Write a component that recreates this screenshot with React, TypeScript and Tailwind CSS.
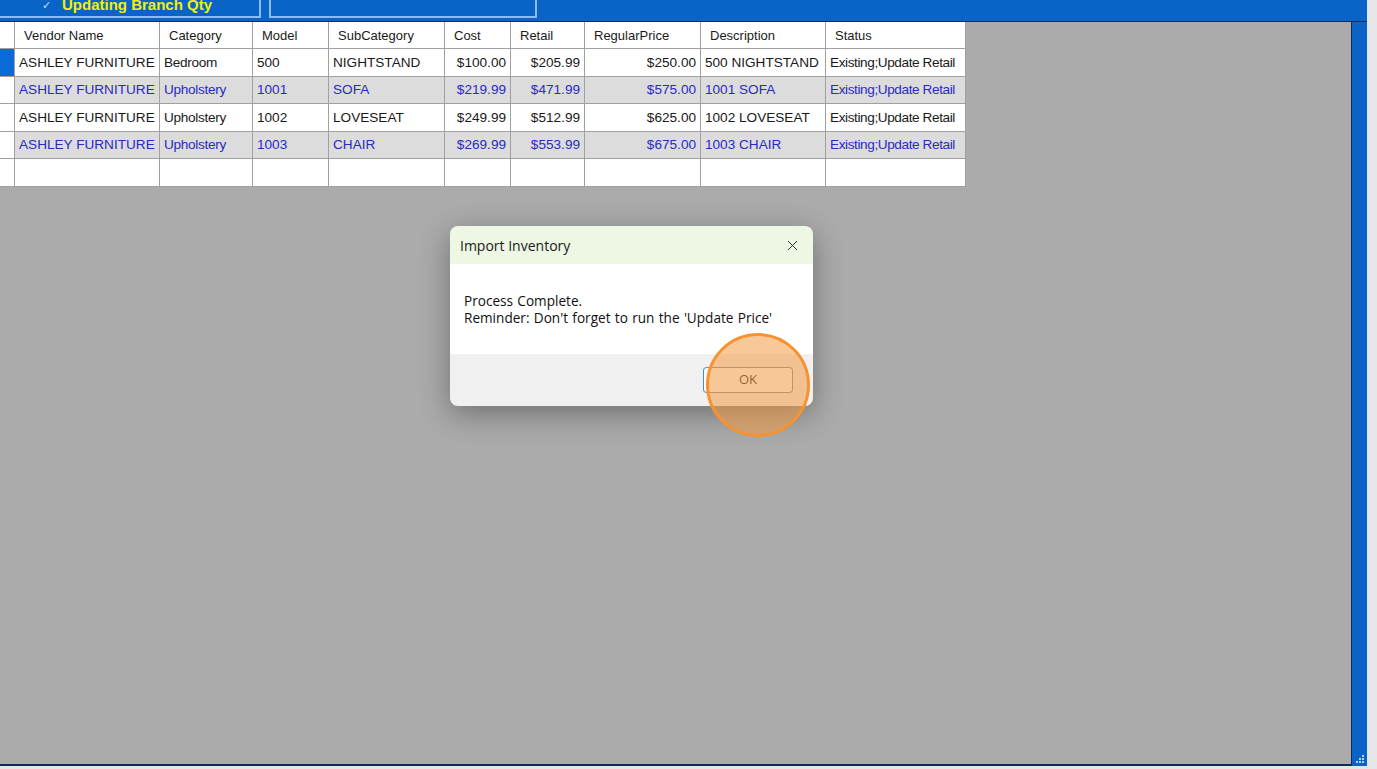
import { X } from 'lucide-react';

type Row = {
  vendor: string;
  category: string;
  model: string;
  sub: string;
  cost: string;
  retail: string;
  regular: string;
  desc: string;
  status: string;
};

const rows: Row[] = [
  { vendor: 'ASHLEY FURNITURE', category: 'Bedroom', model: '500', sub: 'NIGHTSTAND', cost: '$100.00', retail: '$205.99', regular: '$250.00', desc: '500 NIGHTSTAND', status: 'Existing;Update Retail' },
  { vendor: 'ASHLEY FURNITURE', category: 'Upholstery', model: '1001', sub: 'SOFA', cost: '$219.99', retail: '$471.99', regular: '$575.00', desc: '1001 SOFA', status: 'Existing;Update Retail' },
  { vendor: 'ASHLEY FURNITURE', category: 'Upholstery', model: '1002', sub: 'LOVESEAT', cost: '$249.99', retail: '$512.99', regular: '$625.00', desc: '1002 LOVESEAT', status: 'Existing;Update Retail' },
  { vendor: 'ASHLEY FURNITURE', category: 'Upholstery', model: '1003', sub: 'CHAIR', cost: '$269.99', retail: '$553.99', regular: '$675.00', desc: '1003 CHAIR', status: 'Existing;Update Retail' },
];

const cols = [
  { label: 'Vendor Name', w: 'w-[145px]' },
  { label: 'Category', w: 'w-[93px]' },
  { label: 'Model', w: 'w-[76px]' },
  { label: 'SubCategory', w: 'w-[116px]' },
  { label: 'Cost', w: 'w-[66px]' },
  { label: 'Retail', w: 'w-[74px]' },
  { label: 'RegularPrice', w: 'w-[116px]' },
  { label: 'Description', w: 'w-[125px]' },
  { label: 'Status', w: 'w-[140px]' },
];

const cell = 'border border-[#a0a0a0] px-[4px] h-[27.5px] pt-[1px] whitespace-nowrap overflow-hidden';

const App = () => {
  return (
    <div className="relative w-[1377px] h-[769px] overflow-hidden bg-[#e6e6e6] font-['Liberation_Sans',Arial,sans-serif]">
      <div className="flex flex-col w-[1367px] h-[766px] bg-[#0a64c8]">
        {/* top group boxes */}
        <div className="flex h-[22px] gap-[8px] border-b border-[#0c2d5a]">
          <div className="w-[261px] h-[18px] border-r-2 border-b-2 border-[#8dbcf0] flex items-end pl-[42px] overflow-hidden">
            <span className="text-[#c8e0ff] text-[11px] leading-none mb-[5px] mr-[11px]">✓</span>
            <span className="text-[#f4f000] text-[15px] font-bold leading-[16px] mb-[3px] whitespace-nowrap">
              Updating Branch Qty
            </span>
          </div>
          <div className="w-[268px] h-[18px] border-l-2 border-r-2 border-b-2 border-[#8dbcf0]" />
        </div>

        {/* grid area */}
        <div className="flex flex-1 min-h-0">
          <div className="w-[1352px] h-full bg-[#ababab] border-r border-b-2 border-[#0c2d5a] overflow-hidden">
            <table className="w-[966px] border-collapse table-fixed text-[13.6px] text-[#1a1a1a] -mt-[1px] -ml-[1px]">
              <thead>
                <tr className="bg-white">
                  <th className="border border-[#a0a0a0] w-[15px] h-[27px]" />
                  {cols.map((c) => (
                    <th key={c.label} className={`${c.w} border border-[#a0a0a0] text-left font-normal text-[13px] pl-[9px] h-[27px] pt-[1px]`}>
                      {c.label}
                    </th>
                  ))}
                </tr>
              </thead>
              <tbody>
                {rows.map((r, i) => {
                  const alt = i % 2 === 1;
                  const tone = alt ? 'bg-[#dcdcdc] text-[#2a2ac4]' : 'bg-white text-[#1a1a1a]';
                  return (
                    <tr key={r.model} className={tone}>
                      <td className={`border border-[#a0a0a0] ${i === 0 ? 'bg-[#0a6ad6]' : 'bg-white'}`} />
                      <td className={cell}>{r.vendor}</td>
                      <td className={`${cell} tracking-[-0.3px]`}>{r.category}</td>
                      <td className={cell}>{r.model}</td>
                      <td className={cell}>{r.sub}</td>
                      <td className={`${cell} text-right`}>{r.cost}</td>
                      <td className={`${cell} text-right`}>{r.retail}</td>
                      <td className={`${cell} text-right`}>{r.regular}</td>
                      <td className={cell}>{r.desc}</td>
                      <td className={`${cell} tracking-[-0.4px]`}>{r.status}</td>
                    </tr>
                  );
                })}
                <tr className="bg-white">
                  <td className="border border-[#a0a0a0] bg-white" />
                  {cols.map((c) => (
                    <td key={c.label} className={cell} />
                  ))}
                </tr>
              </tbody>
            </table>
          </div>
          <div className="flex-1 flex items-end justify-end pb-[2px] pr-[2px]">
            <svg width="10" height="10" viewBox="0 0 10 10">
              {[
                [7, 1], [4, 4], [7, 4], [1, 7], [4, 7], [7, 7],
              ].map(([x, y]) => (
                <rect key={`${x}-${y}`} x={x} y={y} width="2" height="2" fill="#b9d6f6" />
              ))}
            </svg>
          </div>
        </div>
      </div>

      {/* dialog */}
      <div className="absolute left-[450px] top-[226px] w-[363px] rounded-[8px] overflow-hidden shadow-[0_8px_30px_rgba(0,0,0,0.35)] font-['Open_Sans','Noto_Sans',sans-serif]">
        <div className="h-[38px] bg-[#eef6e4] flex items-center justify-between pl-[10px] pr-[12px]">
          <span className="text-[14px] text-[#1a1a1a]">Import Inventory</span>
          <X size={17} strokeWidth={1.3} color="#222" />
        </div>
        <div className="h-[90px] bg-white pl-[14px] pt-[28px] text-[13.6px] leading-[17px] [word-spacing:0.8px] text-[#111]">
          <div>Process Complete.</div>
          <div>Reminder: Don't forget to run the 'Update Price'</div>
        </div>
        <div className="h-[52px] bg-[#f0f0f0] flex items-center justify-end pr-[20px]">
          <div className="w-[90px] h-[26px] rounded-[4px] border border-[#8a8a8a] border-l-[#3b8ee0] bg-[#fdfdfd] flex items-center justify-center text-[13px] text-[#1a1a1a]">
            OK
          </div>
        </div>
      </div>

      {/* click highlight */}
      <div className="absolute left-[706px] top-[333px] w-[104px] h-[104px] rounded-full border-[3px] border-[#f7922e] bg-[#f29a45]/55" />
    </div>
  );
};

export default App;
